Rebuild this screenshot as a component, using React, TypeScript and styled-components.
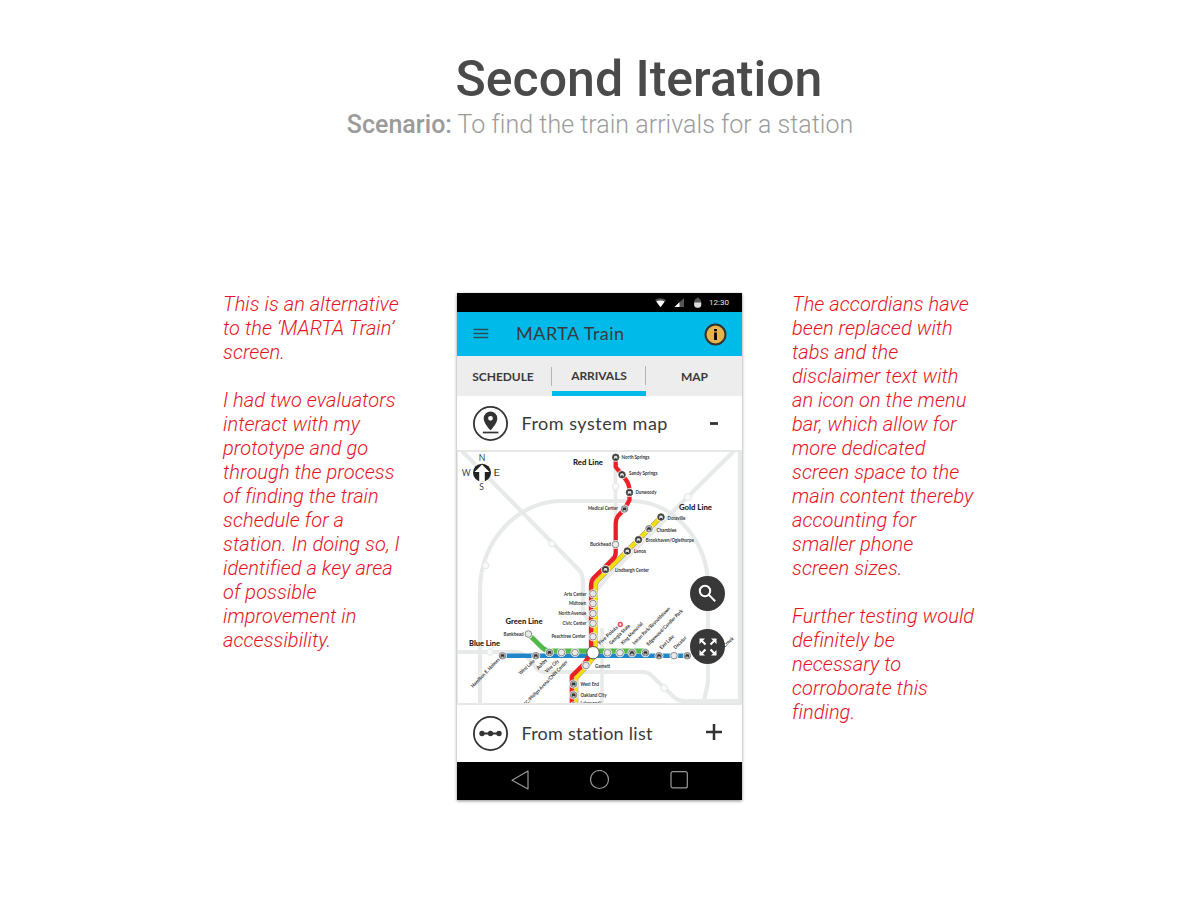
import React from 'react';
import styled, { createGlobalStyle } from 'styled-components';

const Global = createGlobalStyle`
  body { margin: 0; background: #fff; font-family: Roboto, sans-serif; }
  * { box-sizing: border-box; }
  svg { display: block; }
`;

const Page = styled.main`
  width: 1200px;
  height: 900px;
  overflow: hidden;
  padding-top: 49px;
`;
const Header = styled.header`
  display: flex;
  flex-direction: column;
  align-items: center;
  height: 243px;
`;
const Title = styled.h1`
  margin: 0;
  padding-left: 78px;
  font-size: 50px;
  line-height: 60px;
  font-weight: 500;
  color: #4a4a4a;
  white-space: nowrap;
`;
const Subtitle = styled.p`
  margin: 0;
  font-size: 25px;
  line-height: 32px;
  font-weight: 300;
  letter-spacing: 0.03px;
  color: #9b9b9b;
  white-space: nowrap;
  b { font-weight: 500; }
`;
const Columns = styled.section`
  display: grid;
  grid-template-columns: 234px 335px 220px;
  padding-left: 223px;
  align-items: start;
`;
const Note = styled.div`
  font-size: 20px;
  line-height: 24px;
  font-weight: 300;
  font-style: italic;
  letter-spacing: 0.06px;
  color: #e6131f;
  white-space: pre;
  p { margin: 0 0 24px; }
`;
const Phone = styled.div`
  width: 285px;
  height: 507px;
  margin-top: 1px;
  background: #fff;
  box-shadow: 0 1px 3px rgba(0, 0, 0, 0.45);
  font-family: Lato, sans-serif;
  color: #3a3a3a;
  display: flex;
  flex-direction: column;
`;
const StatusBar = styled.div`
  height: 19px;
  background: #000;
  display: flex;
  align-items: center;
  justify-content: flex-end;
  padding-right: 13px;
  color: #e8e8e8;
  font: 8px Roboto, sans-serif;
  svg { margin-right: 6px; }
`;
const AppBar = styled.div`
  height: 44px;
  background: #00bbe9;
  display: flex;
  align-items: center;
  padding: 0 15px 0 16px;
`;
const AppTitle = styled.span`
  flex: 1;
  margin-left: 27px;
  padding-bottom: 3px;
  font-size: 18px;
  letter-spacing: 0.5px;
`;
const Tabs = styled.div`
  height: 40px;
  background: #ededed;
  display: grid;
  grid-template-columns: 95px 94px 96px;
`;
const Tab = styled.div<{ $active?: boolean; $divider?: boolean }>`
  display: flex;
  align-items: center;
  justify-content: center;
  padding-top: 7px;
  padding-bottom: ${p => (p.$active ? '3px' : '7px')};
  border-bottom: ${p => (p.$active ? '5px solid #00bbe9' : '0')};
  font-size: 12px;
  font-weight: 700;
  letter-spacing: -0.05px;
  span { flex: 1; text-align: center; line-height: 19px; padding-right: 2px; border-right: ${p => (p.$divider ? '1px solid #b5b5b5' : '0')}; }
  &:nth-child(n + 2) span { padding: 0 0 0 1px; }
`;
const Row = styled.div<{ $height: number }>`
  height: ${p => p.$height}px;
  display: flex;
  align-items: center;
  padding: 0 19px 0 16px;
`;
const RowLabel = styled.span<{ $spacing: number }>`
  flex: 1;
  margin-left: 13.5px;
  padding-bottom: 1px;
  font-size: 18px;
  letter-spacing: ${p => p.$spacing}px;
`;
const MapPanel = styled.div`
  height: 255px;
  position: relative;
  border: 2px solid #e6e7e7;
  border-left-width: 1px;
  border-right-width: 1px;
  overflow: hidden;
`;
const MapButton = styled.div<{ $top: number }>`
  position: absolute;
  right: 16px;
  top: ${p => p.$top}px;
  width: 35px;
  height: 35px;
  border-radius: 50%;
  background: #383838;
  display: grid;
  place-items: center;
`;
const NavBar = styled.div`
  height: 38px;
  background: #000;
  display: flex;
  align-items: center;
  justify-content: space-between;
  padding: 0 53px 2px 53px;
`;

type Stop = { x: number; y: number; kind?: 'dark' | 'car' };
const stops: Stop[] = [
  { x: 615.7, y: 457.3, kind: 'dark' }, { x: 622, y: 474.7, kind: 'dark' }, { x: 629.5, y: 492.5, kind: 'dark' },
  { x: 624.5, y: 509, kind: 'car' }, { x: 615.5, y: 544.5 }, { x: 605.5, y: 569.5, kind: 'dark' },
  { x: 661, y: 517, kind: 'dark' }, { x: 649, y: 528.7, kind: 'car' }, { x: 638.5, y: 539.7, kind: 'dark' }, { x: 627.3, y: 551, kind: 'dark' },
  { x: 593, y: 593.7 }, { x: 593, y: 603.5 }, { x: 593, y: 613.5 }, { x: 593, y: 623.5 }, { x: 593, y: 636.7 },
  { x: 586, y: 665.5 }, { x: 573.6, y: 684, kind: 'car' }, { x: 573.6, y: 695, kind: 'car' }, { x: 573.6, y: 706, kind: 'car' },
  { x: 528.4, y: 634 }, { x: 549.5, y: 652.5, kind: 'car' }, { x: 561.5, y: 652.5 }, { x: 575, y: 652.5 },
  { x: 502.5, y: 655.7, kind: 'car' }, { x: 535.8, y: 655.7, kind: 'car' },
  { x: 607.5, y: 652.7 }, { x: 620, y: 652.7 }, { x: 632, y: 652.7, kind: 'car' }, { x: 645.5, y: 652.7, kind: 'car' },
  { x: 659, y: 655.7, kind: 'car' }, { x: 674, y: 655.7 }, { x: 687.3, y: 655.7, kind: 'car' },
];

type LabelData = [text: string, x: number, y: number, width: number];
const rightLabels: LabelData[] = [
  ['North Springs', 621.5, 459, 28], ['Sandy Springs', 629, 475.4, 28.5], ['Dunwoody', 635.5, 494.3, 21],
  ['Doraville', 667.5, 520, 18], ['Chamblee', 656.5, 531.5, 20], ['Brookhaven/Oglethorpe', 645.8, 542.2, 48],
  ['Lenox', 634, 553, 12], ['Lindbergh Center', 615, 571.6, 34], ['Garnett', 595, 667.8, 15],
  ['West End', 580.5, 686, 18.5], ['Oakland City', 580.5, 696.6, 26], ['Lakewood/', 580.5, 705.4, 21],
];
const leftLabels: LabelData[] = [
  ['Medical Center', 588, 510, 30], ['Buckhead', 590, 546, 21], ['Arts Center', 564, 595.5, 22.5],
  ['Midtown', 569, 605, 17], ['North Avenue', 558.5, 614.8, 27.5], ['Civic Center', 562.5, 625, 24],
  ['Peachtree Center', 551.5, 638.3, 34], ['Bankhead', 503.5, 635.8, 20],
];
const slantedLabels: [string, number, number, number, number][] = [
  ['Hamilton E. Holmes', 473, 688, 39, -46], ['West Lake', 520.5, 675, 20, -43], ['Ashby', 538.5, 670, 13, -47],
  ['Vine City', 547, 673, 17, -43], ['GWCC/Philips Arena/CNN Center', 520, 712, 69, -46],
  ['Five Points', 600, 645, 25, -43], ['Georgia State', 611, 645, 27, -44], ['King Memorial', 623, 645, 29, -46],
  ['Inman Park/Reynoldstown', 634.5, 645, 51, -45], ['Edgewood/Candler Park', 648.5, 646, 49, -45],
  ['East Lake', 661.5, 649.5, 18, -44], ['Decatur', 675.5, 649.5, 16, -45], ['Indian Creek', 714, 657, 27, -42],
];

const SystemMap = () => (
  <svg width="283" height="251" viewBox="458 452 283 251" fontFamily="Lato, sans-serif" fill="#333">
    <g fill="none" stroke="#e8eaea" strokeWidth="4.2" strokeLinejoin="round">
      <path d="M461 450 580 571Q583 575 583 583V611L591 625" />
      <path d="M735 450 607 577 596 591" />
      <path d="M480 706V590C480 540 519 501 561 501H631C675 501 708 543 708 584V682L703 706" />
      <path d="M615.5 457V545M602 628V704" strokeWidth="3.6" />
      <path d="M457 652H514Q523 652 529 659L537 669Q540 672 546 672H643Q648 672 652 676L675 698Q679 701 684 701H742" />
      <path d="M739.5 452V704" strokeWidth="3.5" />
    </g>
    <g fill="#f9f9f9" stroke="#e5e7e7" strokeWidth="1">
      <circle cx="552" cy="543.5" r="3.3" /><circle cx="485.5" cy="565.5" r="3.3" /><circle cx="615.5" cy="486.5" r="3.3" />
      <circle cx="688" cy="497" r="3.6" /><circle cx="490" cy="652" r="3.3" /><circle cx="664" cy="688" r="3.6" />
    </g>
    <g fill="none" strokeLinejoin="round">
      <path d="M502.5 655.7H689" stroke="#2187c9" strokeWidth="4.5" />
      <path d="M528.4 634 541 646.5Q545.5 651 550 651H647" stroke="#52b848" strokeWidth="4.8" />
      <path d="M661 517 607 571 598 580Q595.2 583 595.2 588V655L588 665 576 678V706" stroke="#888" strokeWidth="4.6" />
      <path d="M661 517 607 571 598 580Q595.2 583 595.2 588V655L588 665 576 678V706" stroke="#f4dd0d" strokeWidth="3.9" />
      <path d="M615.7 457V467L622 474.7 626 480Q629.5 484 629.5 492V500L624.5 509 618 516Q615.7 519 615.7 525V553Q615.7 557 612 560L594 577.5Q591 580.5 591 586V653L584 664 571.8 676V706" stroke="#ed2027" strokeWidth="4.3" />
      <path d="M615.7 519V552L594 577" stroke="#a41d22" strokeWidth=".5" strokeDasharray="1 1" />
    </g>
    {stops.map(({ x, y, kind }, i) => (
      <g key={i} transform={`translate(${x} ${y})`}>
        <circle r="4.5" fill="#fff" opacity=".85" />
        <circle r="3.3" fill={kind === 'dark' ? '#333' : kind === 'car' ? '#bcbcbc' : '#e9e9e9'} stroke={kind === 'dark' ? '#555' : '#808080'} strokeWidth=".9" />
        {kind && <path d="M-1.8 1.7V-.4L-1.1-1.5H1.1L1.8-.4V1.7H1V.9H-1V1.7Z" fill={kind === 'dark' ? '#ddd' : '#333'} />}
      </g>
    ))}
    <circle cx="593" cy="652.7" r="6.2" fill="#fff" stroke="#555" strokeWidth="1" />
    <circle cx="620.3" cy="624.5" r="1.9" fill="#fff" stroke="#ef4b50" strokeWidth="1.5" />
    <g fontSize="5" fontWeight="700">
      {[...rightLabels, ...leftLabels].map(([text, x, y, w]) => (
        <text key={text} x={x} y={y} textLength={w} lengthAdjust="spacingAndGlyphs">{text}</text>
      ))}
      {slantedLabels.map(([text, x, y, w, angle]) => (
        <text key={text} transform={`translate(${x} ${y}) rotate(${angle})`} textLength={w} lengthAdjust="spacingAndGlyphs">{text}</text>
      ))}
    </g>
    <g fontSize="6.9" fontWeight="900" fill="#222">
      <text x="573" y="464.8" textLength="30" lengthAdjust="spacingAndGlyphs">Red Line</text>
      <text x="679" y="509.6" textLength="33" lengthAdjust="spacingAndGlyphs">Gold Line</text>
      <text x="505.5" y="624" textLength="37" lengthAdjust="spacingAndGlyphs">Green Line</text>
      <text x="469" y="646" textLength="31" lengthAdjust="spacingAndGlyphs">Blue Line</text>
    </g>
    <circle cx="482" cy="472.7" r="9" fill="#222" />
    <path d="M482 464.5 489.5 472H484.8V481.8H479.2V472H474.5Z" fill="#fff" />
    <g fontSize="8.6" fill="#444">
      <text x="478.7" y="460.6">N</text><text x="461.7" y="475.8" textLength="9.2">W</text>
      <text x="493.5" y="475.8" textLength="6.5" lengthAdjust="spacingAndGlyphs">E</text><text x="479.3" y="489.5">S</text>
    </g>
  </svg>
);

const PinIcon = () => (
  <svg width="35" height="35" viewBox="0 0 35 35">
    <circle cx="17.5" cy="17.5" r="16.6" fill="none" stroke="#333" strokeWidth="1.8" />
    <path fillRule="evenodd" d="M17.5 5.6A6.8 6.8 0 0 0 10.7 12.4C10.7 17.4 17.5 24.2 17.5 24.2S24.3 17.4 24.3 12.4A6.8 6.8 0 0 0 17.5 5.6ZM17.5 9.9A2.4 2.4 0 1 1 17.5 14.7 2.4 2.4 0 0 1 17.5 9.9Z" fill="#333" />
    <path d="M9.8 26.5H25.4" stroke="#333" strokeWidth="1.7" />
  </svg>
);
const ListIcon = () => (
  <svg width="35" height="35" viewBox="0 0 35 35" fill="#333">
    <circle cx="17.5" cy="17.5" r="16.6" fill="none" stroke="#333" strokeWidth="1.8" />
    <path d="M9 17.5H26" stroke="#333" strokeWidth="2" />
    <circle cx="9" cy="17.5" r="2.7" /><circle cx="17.5" cy="17.5" r="2.7" /><circle cx="26" cy="17.5" r="2.7" />
  </svg>
);

export default function App() {
  return (
    <Page>
      <Global />
      <Header>
        <Title>Second Iteration</Title>
        <Subtitle><b>Scenario:</b> To find the train arrivals for a station</Subtitle>
      </Header>
      <Columns>
        <Note>
          <p>{'This is an alternative\nto the ‘MARTA Train’\nscreen.'}</p>
          <p>{'I had two evaluators\ninteract with my\nprototype and go\nthrough the process\nof finding the train\nschedule for a\nstation. In doing so, I\nidentified a key area\nof possible\nimprovement in\naccessibility.'}</p>
        </Note>
        <Phone>
          <StatusBar>
            <svg width="48" height="12" viewBox="0 0 48 12">
              <path d="M0 3Q5.5-.4 11 3L5.5 10Z" fill="#555" /><path d="M1.3 4.5Q5.5 2.6 9.7 4.5L5.5 10.3Z" fill="#fff" />
              <path d="M19.5 10H29V1Z" fill="#555" /><path d="M19.5 10H24.5V5.3Z" fill="#fff" />
              <rect x="39.2" y="1.7" width="7" height="9" rx="3" fill="#555" /><path d="M39.2 5.5H46.2V7.5Q46.2 10.8 42.7 10.8T39.2 7.5Z" fill="#ddd" /><path d="M41.5.7H44V3H41.5Z" fill="#555" />
            </svg>
            12:30
          </StatusBar>
          <AppBar>
            <svg width="16" height="12" viewBox="0 0 16 12"><path d="M.5 1.5H15.3M.5 5.5H15.3M.5 9.5H15.3" stroke="#2c4d57" strokeWidth="1.4" /></svg>
            <AppTitle>MARTA Train</AppTitle>
            <svg width="23" height="23" viewBox="0 0 23 23">
              <circle cx="11.5" cy="11.5" r="10" fill="#e5b54c" stroke="#333" strokeWidth="2" />
              <path d="M10.1 5.9H12.9V8.2H10.1ZM10.1 9.5H12.9V17H10.1Z" fill="#000" />
            </svg>
          </AppBar>
          <Tabs>
            <Tab $divider><span>SCHEDULE</span></Tab>
            <Tab $active $divider><span>ARRIVALS</span></Tab>
            <Tab><span>MAP</span></Tab>
          </Tabs>
          <Row $height={54}>
            <PinIcon /><RowLabel $spacing={0.5}>From system map</RowLabel>
            <svg width="18" height="18" viewBox="0 0 18 18"><path d="M5 9.5H13" stroke="#333" strokeWidth="2.8" /></svg>
          </Row>
          <MapPanel>
            <SystemMap />
            <MapButton $top={124}>
              <svg width="19" height="19" viewBox="0 0 19 19" fill="none" stroke="#fff" strokeWidth="2"><circle cx="7" cy="7" r="5.2" /><path d="M10.9 10.9 17.2 17.2" /></svg>
            </MapButton>
            <MapButton $top={177}>
              <svg width="18" height="18" viewBox="0 0 18 18" fill="#fff">
                <path d="M.5.5H6L.5 6ZM17.5.5V6L12 .5ZM.5 17.5V12L6 17.5ZM17.5 17.5H12L17.5 12Z" />
                <path d="M2 2 6.5 6.5M16 2 11.5 6.5M2 16 6.5 11.5M16 16 11.5 11.5" stroke="#fff" strokeWidth="2.1" />
              </svg>
            </MapButton>
          </MapPanel>
          <Row $height={57}>
            <ListIcon /><RowLabel $spacing={0.26}>From station list</RowLabel>
            <svg width="18" height="22" viewBox="0 0 18 22"><path d="M1 9H17M9 1V17" stroke="#333" strokeWidth="2.5" /></svg>
          </Row>
          <NavBar>
            <svg width="20" height="20" viewBox="0 0 20 20" fill="none" stroke="#999" strokeWidth="1.2"><path d="M2 10.3 18 1V19Z" strokeLinejoin="round" /></svg>
            <svg width="20" height="20" viewBox="0 0 20 20" fill="none" stroke="#999" strokeWidth="1.2"><circle cx="9.5" cy="9.5" r="9" /></svg>
            <svg width="20" height="20" viewBox="0 0 20 20" fill="none" stroke="#999" strokeWidth="1.2"><rect x="2" y="1.6" width="16.3" height="16.3" rx="2" /></svg>
          </NavBar>
        </Phone>
        <Note>
          <p>{'The accordians have\nbeen replaced with\ntabs and the\ndisclaimer text with\nan icon on the menu\nbar, which allow for\nmore dedicated\nscreen space to the\nmain content thereby\naccounting for\nsmaller phone\nscreen sizes.'}</p>
          <p>{'Further testing would\ndefinitely be\nnecessary to\ncorroborate this\nfinding.'}</p>
        </Note>
      </Columns>
    </Page>
  );
}
